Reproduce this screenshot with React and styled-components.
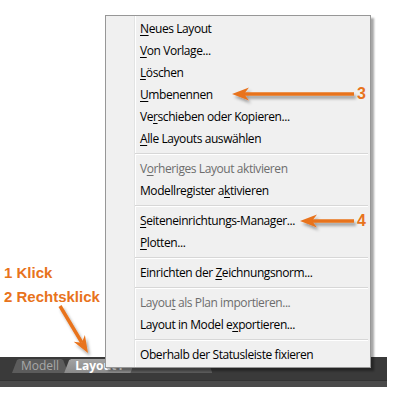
import React from 'react';
import styled, { createGlobalStyle } from 'styled-components';

const GlobalStyle = createGlobalStyle`
	html, body {
		margin: 0;
		padding: 0;
		background: #ffffff;
	}
`;

const ORANGE = '#e8731c';

const Page = styled.div`
	position: relative;
	width: 401px;
	height: 398px;
	display: flex;
	flex-direction: column;
	overflow: hidden;
	background: #fff;
	font-family: "Open Sans", "Noto Sans", sans-serif;
`;

const Canvas = styled.div`
	flex: 0 0 357px;
`;

const StatusBar = styled.div`
	width: 387px;
	height: 30px;
	display: flex;
	flex-direction: column;
	background: #3a3a3a;
`;

const TabStrip = styled.div`
	display: flex;
	align-items: flex-end;
	height: 16px;
	padding-left: 12px;
`;

const Tab = styled.div`
	height: 14px;
	min-width: ${({ w }) => w || 0}px;
	box-sizing: border-box;
	padding: 0 ${({ pad }) => pad || 9}px;
	margin-left: ${({ overlap }) => (overlap ? '-4px' : '0')};
	display: flex;
	align-items: center;
	font-size: 12px;
	line-height: 14px;
	font-weight: ${({ active }) => (active ? 700 : 400)};
	color: ${({ active }) => (active ? '#ffffff' : '#a8a8a8')};
	background: ${({ active }) => (active ? 'linear-gradient(#a3a3a3, #8a8a8a)' : '#5c5c5c')};
	clip-path: polygon(0 100%, 5px 1px, 7px 0, calc(100% - 7px) 0, calc(100% - 5px) 1px, 100% 100%);
`;

const BarGap = styled.div`
	height: 7px;
`;

const BottomStrip = styled.div`
	flex: 1;
	background: #4a4a4a;
	border-top: 1px solid #333;
`;

const Menu = styled.div`
	position: absolute;
	left: 105px;
	top: 15px;
	width: 266px;
	box-sizing: border-box;
	padding: 2px 2px 1px 0;
	border: 1px solid #979797;
	background-color: #f0f0f0;
	background-image: linear-gradient(
		to right,
		transparent 28px,
		#e2e3e3 28px,
		#e2e3e3 29px,
		#ffffff 29px,
		#ffffff 30px,
		transparent 30px
	);
	box-shadow: 3px 3px 2px rgba(0, 0, 0, 0.35);
	font-family: "Open Sans", "Noto Sans", sans-serif;
	font-size: 12px;
	letter-spacing: -0.42px;
`;

const Item = styled.div`
	height: 22px;
	line-height: 22px;
	padding-left: 34px;
	white-space: nowrap;
	color: ${({ disabled }) => (disabled ? '#6d6d6d' : '#000000')};
`;

const U = styled.span`
	text-decoration: underline;
	text-underline-offset: 2px;
`;

const Separator = styled.div`
	height: 8px;
	margin-left: 29px;
	display: flex;
	align-items: center;

	&::before {
		content: '';
		flex: 1;
		height: 1px;
		background: #d7d7d7;
		border-bottom: 1px solid #ffffff;
	}
`;

const Note = styled.div`
	position: absolute;
	left: ${({ x }) => x}px;
	top: ${({ y }) => y}px;
	font-family: "Liberation Sans", Arial, sans-serif;
	font-weight: 700;
	font-size: ${({ size }) => size || 15}px;
	line-height: 17px;
	color: ${ORANGE};
	white-space: nowrap;
`;

const Overlay = styled.svg`
	position: absolute;
	left: 0;
	top: 0;
	pointer-events: none;
`;

const Arrow = ({ x1, y1, x2, y2 }) => {
	// line from (x1,y1) to arrow tip (x2,y2)
	const dx = x2 - x1;
	const dy = y2 - y1;
	const len = Math.sqrt(dx * dx + dy * dy);
	const ux = dx / len;
	const uy = dy / len;
	const head = 17;
	const half = 6.5;
	const bx = x2 - ux * head;
	const by = y2 - uy * head;
	const p1 = `${bx - uy * half},${by + ux * half}`;
	const p2 = `${bx + uy * half},${by - ux * half}`;
	const nx = x2 - ux * (head - 5);
	const ny = y2 - uy * (head - 5);
	return (
		<g filter="url(#shadow)">
			<line x1={x1} y1={y1} x2={nx} y2={ny} stroke={ORANGE} strokeWidth="3.5" />
			<polygon points={`${x2},${y2} ${p1} ${nx},${ny} ${p2}`} fill={ORANGE} />
		</g>
	);
};

const App = () => {
	return (
		<Page>
			<GlobalStyle />
			<Canvas />
			<StatusBar>
				<TabStrip>
					<Tab pad={9}>Modell</Tab>
					<Tab active overlap pad={11}>Layout1</Tab>
					<Tab overlap w={66} />
					<Tab overlap w={20} />
				</TabStrip>
				<BarGap />
				<BottomStrip />
			</StatusBar>

			<Menu>
				<Item><U>N</U>eues Layout</Item>
				<Item><U>V</U>on Vorlage...</Item>
				<Item><U>L</U>öschen</Item>
				<Item><U>U</U>mbenennen</Item>
				<Item>Ve<U>r</U>schieben oder Kopieren...</Item>
				<Item><U>A</U>lle Layouts auswählen</Item>
				<Separator />
				<Item disabled>V<U>o</U>rheriges Layout aktivieren</Item>
				<Item>Modellregister a<U>k</U>tivieren</Item>
				<Separator />
				<Item><U>S</U>eiteneinrichtungs-Manager...</Item>
				<Item><U>P</U>lotten...</Item>
				<Separator />
				<Item>Einrichten der <U>Z</U>eichnungsnorm...</Item>
				<Separator />
				<Item disabled>Layou<U>t</U> als Plan importieren...</Item>
				<Item>Layout in Model e<U>x</U>portieren...</Item>
				<Separator />
				<Item>Oberhalb der Statusleiste fixieren</Item>
			</Menu>

			<Note x={4} y={264}>1 Klick</Note>
			<Note x={4} y={288}>2 Rechtsklick</Note>
			<Note x={357} y={85} size={16}>3</Note>
			<Note x={357} y={212} size={16}>4</Note>

			<Overlay width="401" height="398" viewBox="0 0 401 398">
				<defs>
					<filter id="shadow" x="-20%" y="-50%" width="140%" height="200%">
						<feDropShadow dx="2" dy="3" stdDeviation="1.6" floodColor="#000" floodOpacity="0.35" />
					</filter>
				</defs>
				<Arrow x1={354} y1={94} x2={232} y2={94} />
				<Arrow x1={354} y1={221} x2={300} y2={221} />
				<Arrow x1={60} y1={306} x2={88} y2={353} />
			</Overlay>
		</Page>
	);
};

export default App;
